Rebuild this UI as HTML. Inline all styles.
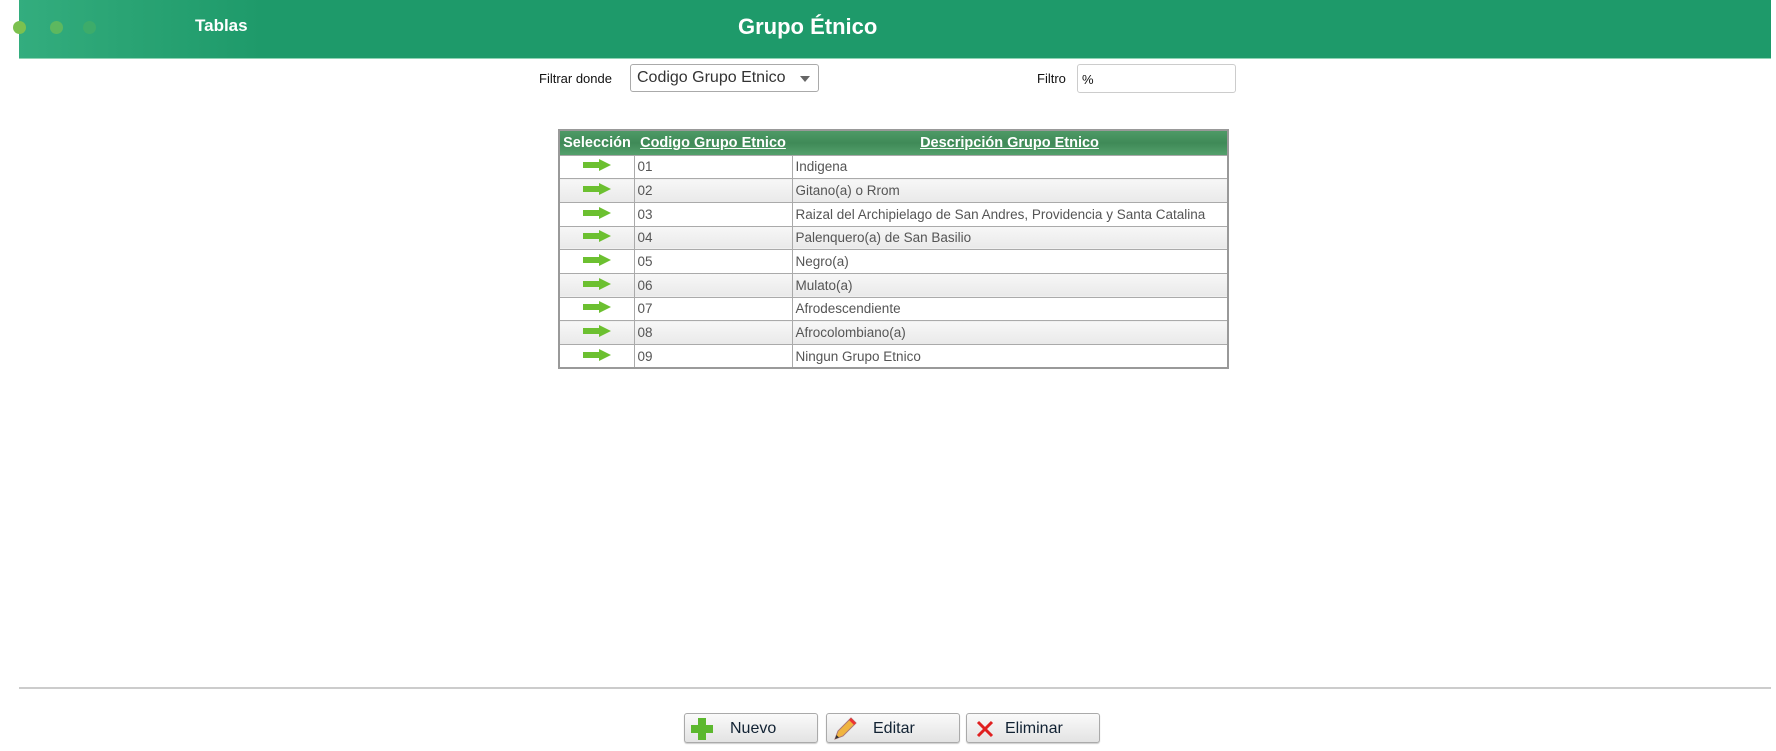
<!DOCTYPE html>
<html><head><meta charset="utf-8"><style>
*{margin:0;padding:0;box-sizing:border-box}
body{width:1776px;height:751px;background:#fff;position:relative;overflow:hidden;font-family:"Liberation Sans",sans-serif}
.hdr{position:absolute;left:19px;top:0;width:1752px;height:59px;background:linear-gradient(90deg,#33ad7e 0%,#2aa474 6%,#1e9a6a 14%,#1e9a6a 100%);border-bottom:1px solid #8fd3b4}
.dot{position:absolute;top:21px;width:13px;height:13px;border-radius:50%}
.t1{position:absolute;top:16px;color:#fff;font-weight:bold;font-size:17px}
.t2{position:absolute;top:14px;color:#fff;font-weight:bold;font-size:22px}
.lbl{position:absolute;font-size:13px;color:#111}
.sel{position:absolute;left:630px;top:64px;width:189px;height:28px;border:1px solid #aaa;border-radius:3px;font-size:16px;color:#333;padding:4px 6px;background:#fff}
.sel:after{content:"";position:absolute;right:8px;top:11px;border:5px solid transparent;border-top:6px solid #666}
.inp{position:absolute;left:1077px;top:64px;width:159px;height:29px;border:1px solid #ccc;border-radius:3px;font-size:13px;padding:7px 4px;color:#111}
table{position:absolute;left:558px;top:129px;border-collapse:collapse;border:2px solid #999;font-size:13.5px;color:#555;table-layout:fixed;width:669px}
th{background:linear-gradient(#4e9a66,#3f8a57 50%,#54a06c);color:#fff;font-size:14.5px;height:25px;padding:0 2px;font-weight:bold;white-space:nowrap;overflow:hidden}
td{border:1px solid #aaa;height:23.7px;padding:0 3px;white-space:nowrap;overflow:hidden}
tr:nth-child(odd) td{background:linear-gradient(#f7f7f7,#e9e9e9)}
td.a{text-align:center}
.line{position:absolute;left:19px;top:687px;width:1752px;height:2px;background:#ccc}
.btn{position:absolute;top:713px;height:30px;border:1px solid #aaa;border-radius:3px;background:linear-gradient(#fafafa,#e3e3e3);font-size:16px;color:#123;box-shadow:0 1px 1px #ccc}
.btn span{position:absolute;top:6px}
</style></head><body>
<div class="hdr">
<div class="dot" style="left:-6px;background:#7cc14f"></div>
<div class="dot" style="left:31px;background:#5db85f"></div>
<div class="dot" style="left:64px;background:#3dac6a"></div>
<div class="t1" style="left:176px">Tablas</div>
<div class="t2" style="left:719px">Grupo Étnico</div>
</div>
<div class="lbl" style="left:539px;top:71px">Filtrar donde</div>
<div class="sel">Codigo Grupo Etnico</div>
<div class="lbl" style="left:1037px;top:71px">Filtro</div>
<div class="inp">%</div>
<table>
<colgroup><col style="width:75px"><col style="width:158px"><col style="width:436px"></colgroup>
<tr><th>Selección</th><th><u>Codigo Grupo Etnico</u></th><th><u>Descripción Grupo Etnico</u></th></tr>
<tr><td class="a"><svg width="28" height="12"><path d="M0 3h16V0l12 6-12 6V9H0z" fill="#6cc030"/></svg></td><td>01</td><td>Indigena</td></tr>
<tr><td class="a"><svg width="28" height="12"><path d="M0 3h16V0l12 6-12 6V9H0z" fill="#6cc030"/></svg></td><td>02</td><td>Gitano(a) o Rrom</td></tr>
<tr><td class="a"><svg width="28" height="12"><path d="M0 3h16V0l12 6-12 6V9H0z" fill="#6cc030"/></svg></td><td>03</td><td>Raizal del Archipielago de San Andres, Providencia y Santa Catalina</td></tr>
<tr><td class="a"><svg width="28" height="12"><path d="M0 3h16V0l12 6-12 6V9H0z" fill="#6cc030"/></svg></td><td>04</td><td>Palenquero(a) de San Basilio</td></tr>
<tr><td class="a"><svg width="28" height="12"><path d="M0 3h16V0l12 6-12 6V9H0z" fill="#6cc030"/></svg></td><td>05</td><td>Negro(a)</td></tr>
<tr><td class="a"><svg width="28" height="12"><path d="M0 3h16V0l12 6-12 6V9H0z" fill="#6cc030"/></svg></td><td>06</td><td>Mulato(a)</td></tr>
<tr><td class="a"><svg width="28" height="12"><path d="M0 3h16V0l12 6-12 6V9H0z" fill="#6cc030"/></svg></td><td>07</td><td>Afrodescendiente</td></tr>
<tr><td class="a"><svg width="28" height="12"><path d="M0 3h16V0l12 6-12 6V9H0z" fill="#6cc030"/></svg></td><td>08</td><td>Afrocolombiano(a)</td></tr>
<tr><td class="a"><svg width="28" height="12"><path d="M0 3h16V0l12 6-12 6V9H0z" fill="#6cc030"/></svg></td><td>09</td><td>Ningun Grupo Etnico</td></tr>
</table>
<div class="line"></div>
<div class="btn" style="left:684px;width:134px"><svg style="position:absolute;left:6px;top:4px" width="22" height="22"><path d="M7 0h8v7h7v8h-7v7H7v-7H0V7h7z" fill="#5cb82e"/></svg><span style="left:45px">Nuevo</span></div>
<div class="btn" style="left:826px;width:134px"><svg style="position:absolute;left:6px;top:3px" width="24" height="24"><path d="M2 22l3-8L18 1l5 5L10 19z" fill="#f0b440" stroke="#a77" stroke-width="1"/><path d="M18 1l5 5-2 2-5-5z" fill="#e33"/><path d="M2 22l1.5-4 2.5 2.5z" fill="#333"/></svg><span style="left:46px">Editar</span></div>
<div class="btn" style="left:966px;width:134px"><svg style="position:absolute;left:9px;top:6px" width="18" height="18"><path d="M2 2l14 14M16 2L2 16" stroke="#e02020" stroke-width="3"/></svg><span style="left:38px">Eliminar</span></div>
</body></html>
